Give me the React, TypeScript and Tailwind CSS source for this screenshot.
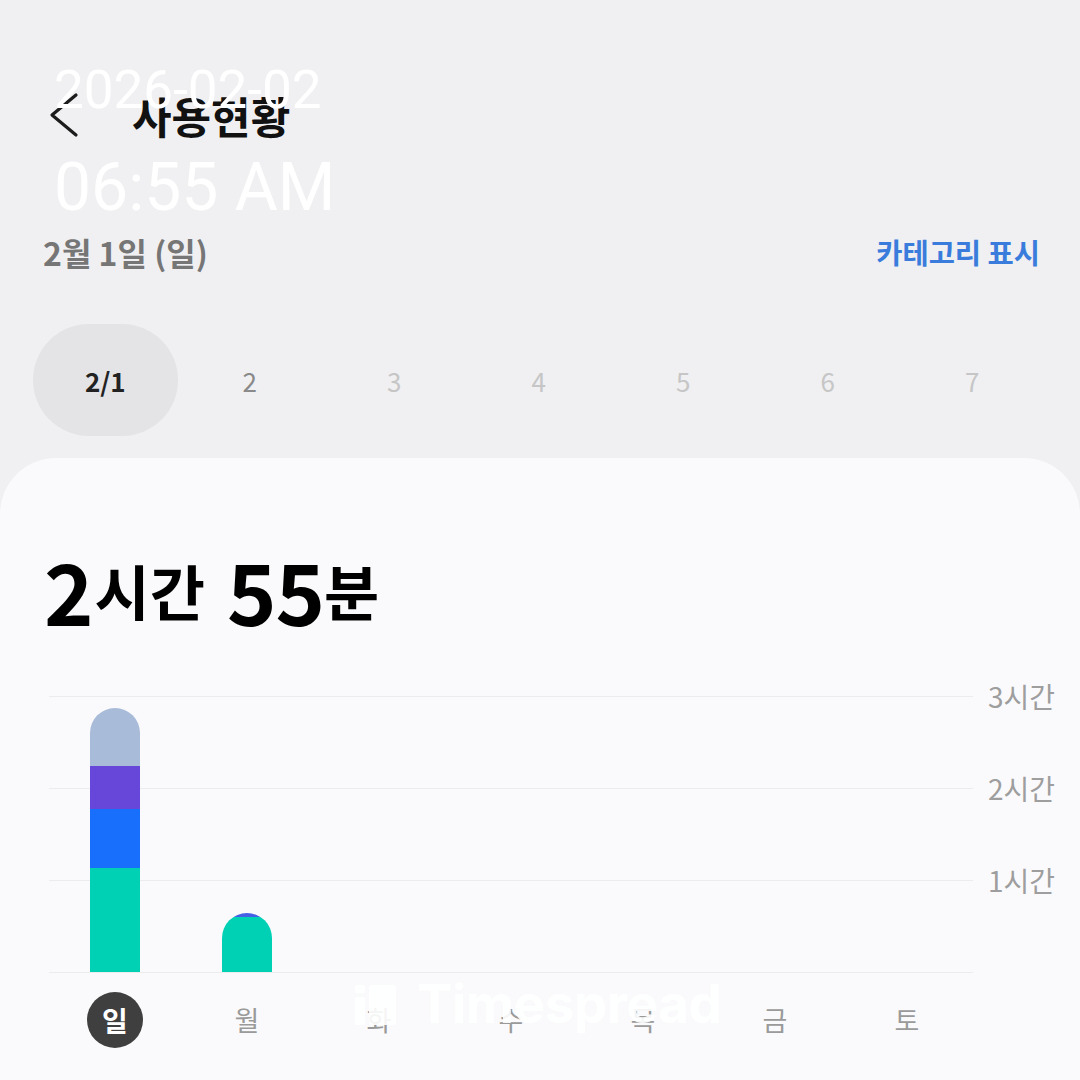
const kr = "font-['Noto_Sans_CJK_KR','Noto_Sans',sans-serif]";

export default function App() {
  const dates = ["2/1", "2", "3", "4", "5", "6", "7"];
  const days = ["일", "월", "화", "수", "목", "금", "토"];

  // bar segments, bottom to top, in px
  const bars = [
    [
      { h: 104, c: "bg-[#00d0b4]" },
      { h: 59, c: "bg-[#176ffb]" },
      { h: 43, c: "bg-[#6747d9]" },
      { h: 58, c: "bg-[#a8bbd9]" },
    ],
    [
      { h: 55, c: "bg-[#00d0b4]" },
      { h: 4, c: "bg-[#4560e4]" },
    ],
    [],
    [],
    [],
    [],
    [],
  ];

  return (
    <div className={`relative w-[1080px] h-[1080px] overflow-hidden bg-[#f0f0f2] flex flex-col ${kr}`}>
      {/* Header */}
      <div className="pt-[80px] h-[150px] flex items-center pl-[48px]">
        <svg width="32" height="46" viewBox="0 0 32 46" fill="none" stroke="#1c1c1c" strokeWidth="3.2" strokeLinecap="round" strokeLinejoin="round">
          <polyline points="28,3 4,23 28,43" />
        </svg>
        <h1 className="ml-[52px] text-[43px] font-bold text-[#111] leading-none">사용현황</h1>
      </div>

      {/* Date + category */}
      <div className="mt-[80px] h-[44px] pl-[43px] pr-[40px] flex items-center justify-between">
        <span className="text-[32px] font-semibold text-[#767676]">2월 1일 (일)</span>
        <span className="text-[28.5px] font-bold text-[#3a7cdc]">카테고리 표시</span>
      </div>

      {/* Date pills */}
      <div className="mt-[50px] h-[112px] pl-[33px] grid grid-cols-[repeat(7,144.5px)]">
        {dates.map((d, i) => (
          <div
            key={d}
            className={`flex items-center justify-center rounded-[56px] text-[26px] ${
              i === 0
                ? "bg-[#e4e4e6] font-bold text-[#222]"
                : i === 1
                ? "text-[#8a8a8a]"
                : "text-[#c6c6c6]"
            }`}
          >
            {d}
          </div>
        ))}
      </div>

      {/* Card */}
      <div className="mt-[22px] flex-1 bg-[#fafafc] rounded-t-[56px]">
        <div className="pt-[87px] h-[177px] pl-[44px] flex items-center text-black font-bold leading-none">
          <span className="text-[84px] tracking-[-1px]">2</span>
          <span className="text-[60px] ml-[2px]">시간</span>
          <span className="text-[84px] ml-[22px] tracking-[-1px]">55</span>
          <span className="text-[60px]">분</span>
        </div>

        {/* Chart */}
        <div className="mt-[61px] pl-[49px] grid grid-cols-[924px_1fr]">
          <div className="grid">
            {/* gridlines */}
            <div className="col-start-1 row-start-1 flex flex-col">
              <div className="h-[92px] border-t border-[#ececef]" />
              <div className="h-[92px] border-t border-[#ececef]" />
              <div className="h-[92px] border-t border-[#ececef]" />
              <div className="border-t border-[#ececef]" />
            </div>
            {/* bars */}
            <div className="col-start-1 row-start-1 grid grid-cols-7 items-end h-[276px]">
              {bars.map((segs, i) => (
                <div key={i} className="flex justify-center">
                  {segs.length > 0 && (
                    <div className="w-[50px] flex flex-col-reverse rounded-t-[25px] overflow-hidden">
                      {segs.map((s, j) => (
                        <div key={j} className={s.c} style={{ height: s.h }} />
                      ))}
                    </div>
                  )}
                </div>
              ))}
            </div>
          </div>
          <div className="-mt-[17px] pl-[15px] flex flex-col text-[28px] text-[#9e9e9e]">
            <span className="h-[92px] leading-[34px]">3시간</span>
            <span className="h-[92px] leading-[34px]">2시간</span>
            <span className="h-[92px] leading-[34px]">1시간</span>
          </div>
        </div>

        {/* Day labels */}
        <div className="mt-[19px] pl-[49px] w-[973px] grid grid-cols-7 h-[56px]">
          {days.map((d, i) => (
            <div key={d} className="flex items-center justify-center">
              {i === 0 ? (
                <span className="w-[56px] h-[56px] rounded-full bg-[#3f3f3f] text-white text-[28px] font-bold flex items-center justify-center">
                  {d}
                </span>
              ) : (
                <span className="text-[27px] text-[#9a9a9a]">{d}</span>
              )}
            </div>
          ))}
        </div>
      </div>

      {/* Timestamp overlay */}
      <div className="absolute left-[54px] top-[64px] flex flex-col text-white font-['Roboto',sans-serif] font-normal leading-none">
        <span className="text-[53px]">2026-02-02</span>
        <span className="mt-[38px] text-[66px]">06:55 AM</span>
      </div>

      {/* Watermark */}
      <div className="absolute left-[355px] top-[978px] flex items-center gap-[20px] text-white/90">
        <svg width="42" height="44" viewBox="0 0 42 44" className="fill-white/90">
          <rect x="0" y="2" width="10" height="8" rx="2" />
          <rect x="0" y="14" width="10" height="28" rx="2" />
          <rect x="14" y="2" width="27" height="40" rx="3" />
        </svg>
        <span className="font-['Inter',sans-serif] font-bold text-[53px] leading-none tracking-[-0.5px]">Timespread</span>
      </div>
    </div>
  );
}
